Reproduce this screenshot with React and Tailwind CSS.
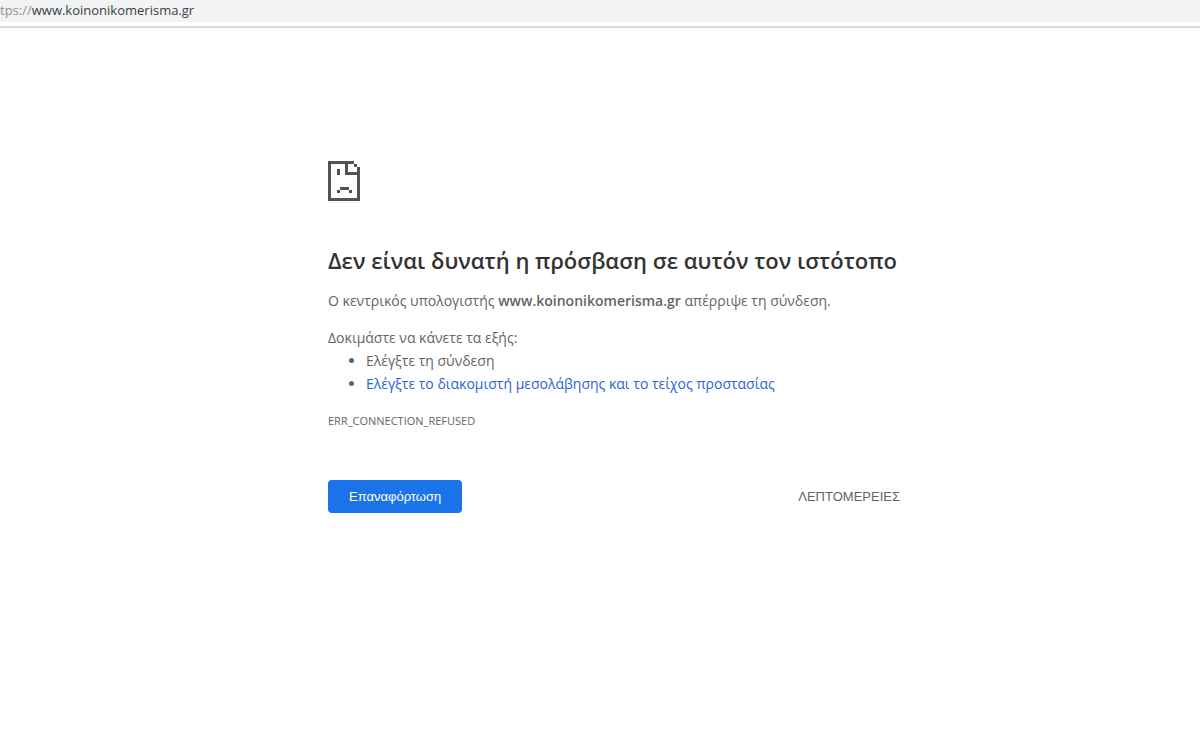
import React from "react";

const SadFileIcon = () => {
  return (
    <svg
      className="h-10 w-8"
      viewBox="0 0 32 40"
      fill="#535353"
      shapeRendering="crispEdges"
      aria-hidden="true"
    >
      <path d="M0 0h26v3H3v34h26V8h3v32H0z" />
      <path d="M17 3h3v8h9v3H17z" />
      <path d="M26 3h3v3h3v3h-3v-3h-3z" />
      <path d="M9 8h3v6H9z" />
      <path d="M12 26h9v3h-9zM9 29h3v3H9zM21 29h3v3h-3z" />
    </svg>
  );
};

const AddressBar = () => {
  return (
    <header className="border-b-2 border-[#d9dadb] bg-white pb-1">
      <div className="h-[22px] bg-[#f1f3f4] text-[13px] leading-5 text-[#3c4043]">
        <span className="text-[#8d9195]">tps://</span>www.koinonikomerisma.gr
      </div>
    </header>
  );
};

const App = () => {
  return (
    <div className="min-h-screen bg-white font-['Open_Sans','Noto_Sans',sans-serif]">
      <AddressBar />
      <div className="pt-[133px] pl-7">
        <main className="mx-auto w-full max-w-[572px] text-sm leading-[23px] text-[#646464]">
          <SadFileIcon />
          <h1 className="mt-[43px] text-[22px] leading-8 font-semibold text-[#333333]">
            Δεν είναι δυνατή η πρόσβαση σε αυτόν τον ιστότοπο
          </h1>
          <p className="mt-[13px]">
            Ο κεντρικός υπολογιστής{" "}
            <strong className="font-semibold">www.koinonikomerisma.gr</strong>{" "}
            απέρριψε τη σύνδεση.
          </p>
          <p className="mt-[14px]">Δοκιμάστε να κάνετε τα εξής:</p>
          <ul className="list-disc pl-[38px]">
            <li>Ελέγξτε τη σύνδεση</li>
            <li>
              <a href="#buttons" className="text-[#2b62d9]">
                Ελέγξτε το διακομιστή μεσολάβησης και το τείχος προστασίας
              </a>
            </li>
          </ul>
          <div className="mt-[14px] text-[11px] leading-[23px]">
            ERR_CONNECTION_REFUSED
          </div>
          <div
            id="buttons"
            className="mt-12 flex items-center justify-between font-['Liberation_Sans',sans-serif]"
          >
            <button className="h-[33px] rounded bg-[#1a73e8] px-[21px] text-[13px] text-white">
              Επαναφόρτωση
            </button>
            <button className="text-[13px]">ΛΕΠΤΟΜΕΡΕΙΕΣ</button>
          </div>
        </main>
      </div>
    </div>
  );
};

export default App;
